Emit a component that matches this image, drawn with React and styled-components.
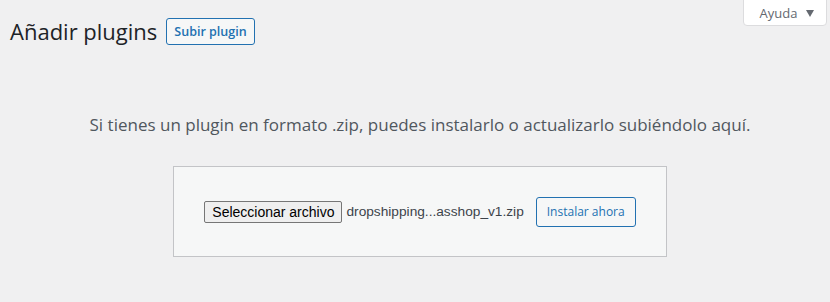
import React from "react";
import styled, { createGlobalStyle } from "styled-components";

const GlobalStyle = createGlobalStyle`
  html, body {
    margin: 0;
    padding: 0;
    background: #f0f0f1;
  }
  body {
    font-family: "Open Sans", "Noto Sans", sans-serif;
    color: #3c434a;
    width: 830px;
    height: 302px;
    overflow: hidden;
  }
`;

const Page = styled.div`
  position: relative;
  padding-left: 10px;
  height: 302px;
`;

const HelpTab = styled.button`
  position: absolute;
  top: -1px;
  right: 3px;
  width: 84px;
  height: 27px;
  display: flex;
  align-items: center;
  justify-content: center;
  gap: 9px;
  background: #fff;
  border: 1px solid #dcdcde;
  border-radius: 0 0 4px 4px;
  color: #646970;
  font-family: inherit;
  font-size: 13px;
  padding: 0 0 0 4px;
`;

const Caret = styled.span`
  width: 0;
  height: 0;
  border-left: 4px solid transparent;
  border-right: 4px solid transparent;
  border-top: 7px solid #646970;
  margin-top: 1px;
`;

const Header = styled.div`
  display: flex;
  align-items: center;
  gap: 9px;
  padding-top: 17px;
`;

const Title = styled.h1`
  margin: 0;
  font-size: 22px;
  font-weight: 400;
  line-height: 28px;
  color: #1d2327;
`;

const PageAction = styled.button`
  height: 27px;
  padding: 0 7px;
  background: #f6f7f7;
  border: 1px solid #2271b1;
  border-radius: 3px;
  color: #2271b1;
  font-family: inherit;
  font-size: 12.5px;
  font-weight: 600;
`;

const Upload = styled.div`
  display: flex;
  flex-direction: column;
  align-items: center;
  padding-top: 68px;
`;

const Help = styled.p`
  margin: 0 0 29px;
  font-size: 17px;
  line-height: 24px;
  color: #50575e;
`;

const Form = styled.form`
  width: 494px;
  height: 91px;
  box-sizing: border-box;
  display: flex;
  align-items: center;
  justify-content: center;
  background: #f6f7f7;
  border: 1px solid #c3c4c7;
`;

const FileButton = styled.button`
  height: 22px;
  padding: 0 7px;
  background: #efefef;
  border: 1px solid #767676;
  border-radius: 2px;
  color: #000;
  font-family: "Liberation Sans", Arial, sans-serif;
  font-size: 14px;
`;

const FileName = styled.span`
  margin-left: 4px;
  font-family: "Liberation Sans", Arial, sans-serif;
  font-size: 13.7px;
  color: #3c434a;
`;

const Submit = styled.button`
  margin-left: 12px;
  height: 30px;
  padding: 0 10px;
  background: #f6f7f7;
  border: 1px solid #2271b1;
  border-radius: 3px;
  color: #2271b1;
  font-family: inherit;
  font-size: 12px;
`;

export default function App() {
  return (
    <>
      <GlobalStyle />
      <Page>
        <HelpTab>
          Ayuda <Caret />
        </HelpTab>
        <Header>
          <Title>Añadir plugins</Title>
          <PageAction>Subir plugin</PageAction>
        </Header>
        <Upload>
          <Help>
            Si tienes un plugin en formato .zip, puedes instalarlo o
            actualizarlo subiéndolo aquí.
          </Help>
          <Form onSubmit={(e) => e.preventDefault()}>
            <FileButton type="button">Seleccionar archivo</FileButton>
            <FileName>dropshipping...asshop_v1.zip</FileName>
            <Submit type="submit">Instalar ahora</Submit>
          </Form>
        </Upload>
      </Page>
    </>
  );
}
